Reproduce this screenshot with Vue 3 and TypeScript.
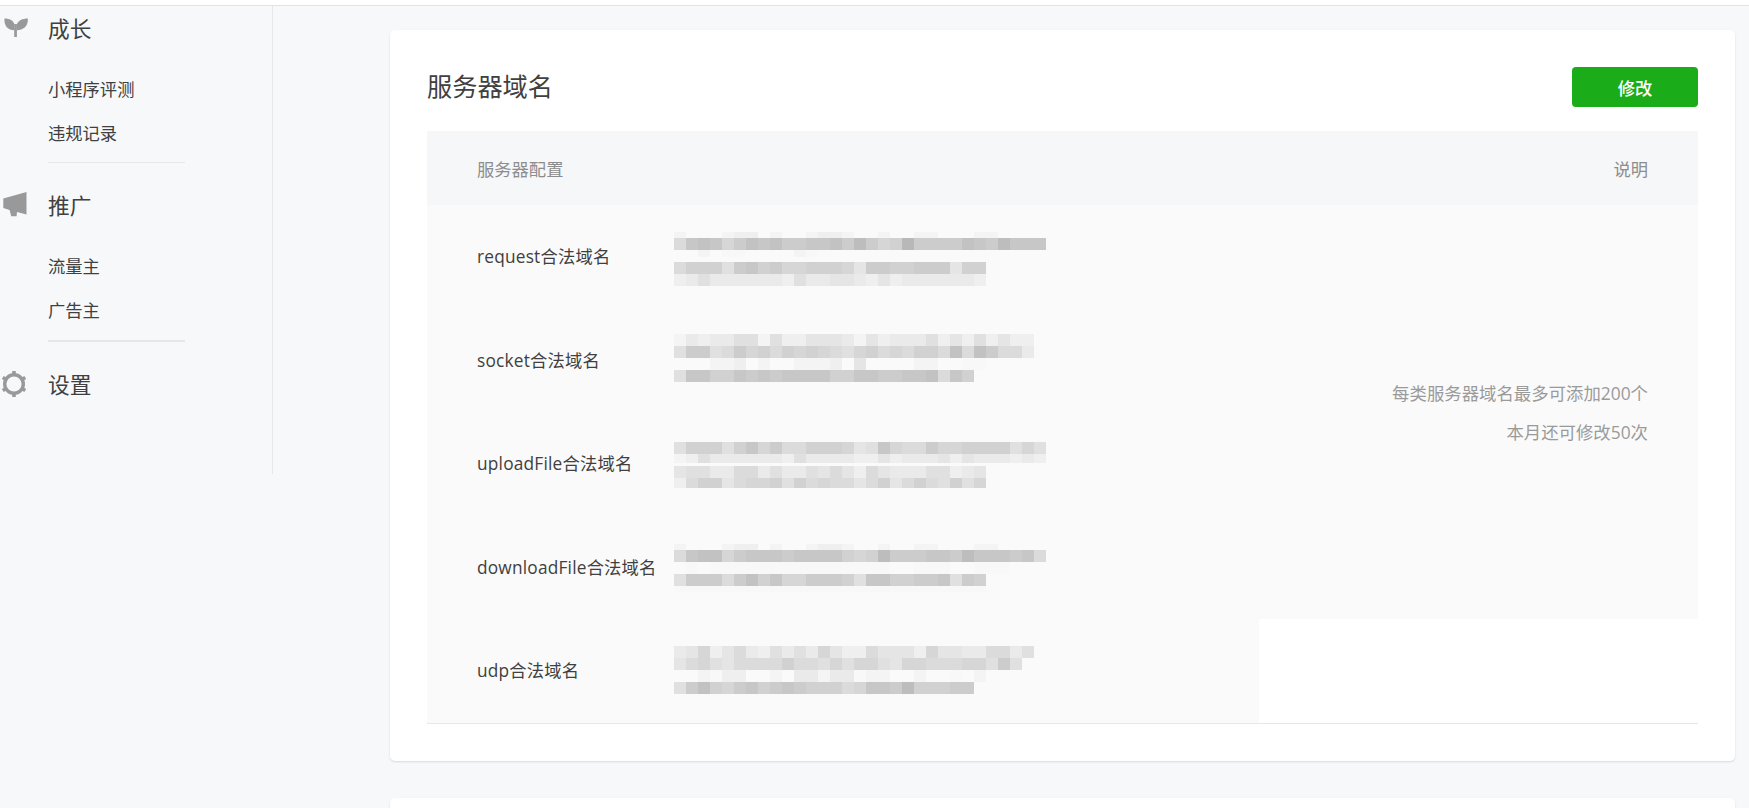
<script setup lang="ts">
interface Line { h: number; cells: string }
interface Row { name: string; top: number; lines: Line[] }

const ramp = ['b8', 'bd', 'c2', 'c7', 'cc', 'd1', 'd6', 'db', 'e0', 'e5', 'ea', 'ef', 'f4', 'f8', 'fa']
function gray(c: string): string {
  const v = ramp[parseInt(c, 16)]
  return `#${v}${v}${v}`
}

const rows: Row[] = [
  {
    name: 'request合法域名', top: 27,
    lines: [
      { h: 6, cells: 'ceeecbbeceecbbceeceecceeecceeee' },
      { h: 12, cells: '7323642324433241465044442341333' },
      { h: 7, cells: 'eeceddeeeecdeeeeeeeeeeeeeeeeeee' },
      { h: 5, cells: '' },
      { h: 12, cells: '75558435466555694455444955' },
      { h: 12, cells: 'ba8aaaaaab8aa99ab9baaaaaab' }
    ]
  },
  {
    name: 'socket合法域名', top: 25,
    lines: [
      { h: 12, cells: 'cabaa88c8bb999ac9baaa8b9b8b9bb' },
      { h: 12, cells: '84487465756567865767557272477a' },
      { h: 12, cells: 'eeeccbeceecccbe9eeeecceeddeeee' },
      { h: 12, cells: '8335534343333553344332735' }
    ]
  },
  {
    name: 'uploadFile合法域名', top: 30,
    lines: [
      { h: 12, cells: '8555853647755569836774665555868' },
      { h: 9, cells: 'cb8aaaaaab8aaaabb9baaa9b9aaabab' },
      { h: 3, cells: '' },
      { h: 12, cells: '988aa77a8aa8979b79aaa88ba9' },
      { h: 10, cells: 'b75597665857677975975785868'.slice(0, 26) }
    ]
  },
  {
    name: 'downloadFile合法域名', top: 28,
    lines: [
      { h: 6, cells: 'ceeecbbeceecbbceeceecceeecceeee' },
      { h: 12, cells: '7322643334333356514443341333437' },
      { h: 12, cells: 'ededddddddddddddddeedddeedddeee' },
      { h: 12, cells: '84447425366444583355443845' },
      { h: 6, cells: 'dddddddddddddddddddddddddd' }
    ]
  },
  {
    name: 'udp合法域名', top: 27,
    lines: [
      { h: 12, cells: 'a96b97ab8a8a69bb7999b699aa77a8' },
      { h: 12, cells: '9768977775778686689667776684' + '8' },
      { h: 12, cells: 'eecdbbeeceaacaadcceeceedecee' },
      { h: 12, cells: '8425643543455576334155544' }
    ]
  }
]
</script>

<template>
  <div class="page">
    <div class="topbar"></div>
    <div class="layout">
      <aside class="sidebar">
        <section class="nav-group">
          <h3 class="nav-title">
            <span class="nav-icon">
              <svg width="28" height="28" viewBox="0 0 28 28">
                <path d="M4.5 5.5C9.5 5.5 13.5 7.5 14.4 11.5V17.2C8 17.2 3.8 13 4.5 5.5Z" />
                <path d="M27.8 5.5C22.8 5.5 17.8 7.5 16.8 11.5V17.2C23.5 17.2 28.5 13 27.8 5.5Z" />
                <rect x="14.2" y="11" width="2.7" height="13" />
              </svg>
            </span>
            成长
          </h3>
          <a class="nav-item">小程序评测</a>
          <a class="nav-item">违规记录</a>
        </section>
        <section class="nav-group">
          <h3 class="nav-title">
            <span class="nav-icon">
              <svg width="28" height="28" viewBox="0 0 28 28">
                <path d="M3.3 8.5L26.5 2V24.5L17 22L16.6 26.2H11.2L9.6 20L3.3 18Z" />
              </svg>
            </span>
            推广
          </h3>
          <a class="nav-item">流量主</a>
          <a class="nav-item">广告主</a>
        </section>
        <section class="nav-group last">
          <h3 class="nav-title">
            <span class="nav-icon">
              <svg width="28" height="28" viewBox="0 0 28 28">
                <rect x="12.2" y="2" width="3.6" height="26" />
                <rect x="12.2" y="2" width="3.6" height="26" transform="rotate(60 14 15)" />
                <rect x="12.2" y="2" width="3.6" height="26" transform="rotate(120 14 15)" />
                <circle cx="14" cy="15" r="11" />
                <circle cx="14" cy="15" r="7.6" fill="#f7f8fa" />
              </svg>
            </span>
            设置
          </h3>
        </section>
      </aside>

      <main class="main">
        <section class="card">
          <header class="card-head">
            <h2 class="card-title">服务器域名</h2>
            <button class="btn" type="button">修改</button>
          </header>
          <div class="table-wrap">
            <table class="table">
              <colgroup>
                <col class="col-name" />
                <col class="col-value" />
                <col class="col-note" />
              </colgroup>
              <thead>
                <tr>
                  <th colspan="2" class="th-left">服务器配置</th>
                  <th class="th-right">说明</th>
                </tr>
              </thead>
              <tbody>
                <tr v-for="(row, i) in rows" :key="row.name">
                  <td class="td-name">{{ row.name }}</td>
                  <td class="td-value">
                    <div class="mosaic" :style="{ marginTop: row.top + 'px' }">
                      <div
                        v-for="(line, l) in row.lines"
                        :key="l"
                        class="mosaic-line"
                        :style="{ height: line.h + 'px' }"
                      >
                        <span
                          v-for="(c, k) in line.cells"
                          :key="k"
                          class="cell"
                          :style="{ background: gray(c) }"
                        ></span>
                      </div>
                    </div>
                  </td>
                  <td v-if="i === 0" rowspan="4" class="td-note">
                    <p>每类服务器域名最多可添加200个</p>
                    <p>本月还可修改50次</p>
                  </td>
                </tr>
              </tbody>
            </table>
          </div>
        </section>
        <section class="card next"></section>
      </main>
    </div>
  </div>
</template>

<style>
html, body {
  margin: 0;
  height: 808px;
  overflow: hidden;
  background: #f7f8fa;
}
</style>

<style scoped>
.page {
  height: 808px;
  overflow: hidden;
  background: #f7f8fa;
  color: #404040;
  font-family: "Open Sans", "Noto Sans CJK SC", sans-serif;
  font-size: 17.3px;
}
.topbar {
  height: 5px;
  background: #fff;
  border-bottom: 1px solid #e0e2e5;
}
.layout {
  display: flex;
  align-items: flex-start;
}
.sidebar {
  width: 272px;
  height: 468px;
  flex: none;
  border-right: 1px solid #e5e7ea;
}
.nav-group {
  width: 185px;
  margin-bottom: 18px;
}
.nav-group:first-child {
  margin-top: -2px;
}
.nav-group::after {
  content: "";
  display: block;
  height: 1px;
  margin: 6px 0 0 48px;
  background: #e5e7ea;
}
.nav-group + .nav-group::after {
  height: 2px;
  margin-top: 7px;
}
.nav-group.last::after {
  display: none;
}
.nav-title {
  display: flex;
  align-items: center;
  height: 46px;
  margin: 0 0 18px;
  font-size: 21.7px;
  font-weight: 400;
}
.nav-icon {
  width: 48px;
  height: 28px;
  flex: none;
}
.nav-icon svg {
  display: block;
  fill: #999;
}
.nav-item {
  display: block;
  margin-left: 48px;
  height: 44px;
  line-height: 44px;
}
.main {
  flex: 1;
  min-width: 0;
  padding: 24px 14px 0 117px;
}
.card {
  padding: 37px;
  background: #fff;
  border-radius: 5px;
  box-shadow: 0 1px 2px rgba(150, 150, 150, 0.3);
}
.card.next {
  margin-top: 37px;
  height: 200px;
}
.card-head {
  display: flex;
  align-items: center;
  justify-content: space-between;
  height: 40px;
  margin-bottom: 24px;
}
.card-title {
  margin: 0 0 4px;
  font-size: 25.2px;
  font-weight: 400;
}
.btn {
  width: 126px;
  height: 40px;
  padding: 0;
  border: 0;
  border-radius: 4px;
  background: #1aad19;
  color: #fff;
  font: inherit;
  font-weight: 500;
}
.table-wrap {
  border-bottom: 1px solid #e5e7ea;
}
.table {
  display: table;
  width: 100%;
  table-layout: fixed;
  border-collapse: collapse;
  border-spacing: 0;
}
.col-name { width: 247px; }
.col-value { width: 585px; }
.col-note { width: 439px; }
thead tr { height: 74px; }
th {
  padding: 0 50px;
  background: #f6f7f9;
  color: #8d8d8d;
  font-weight: 400;
}
.th-left { text-align: left; }
.th-right { text-align: right; }
tbody tr { height: 104px; }
tbody tr:nth-child(even) { height: 103px; }
td {
  padding: 0;
  background: #fafafa;
}
.td-name {
  padding: 0 0 3px 50px;
  white-space: nowrap;
  letter-spacing: 0.2px;
}
.td-value { vertical-align: top; }
.td-note {
  padding: 2px 50px 0 0;
  text-align: right;
  color: #9a9a9a;
  font-size: 17.4px;
}
.td-note p {
  margin: 0;
  line-height: 39px;
}
.mosaic-line {
  display: flex;
}
.cell {
  width: 12px;
  height: 100%;
  flex: none;
}
</style>
